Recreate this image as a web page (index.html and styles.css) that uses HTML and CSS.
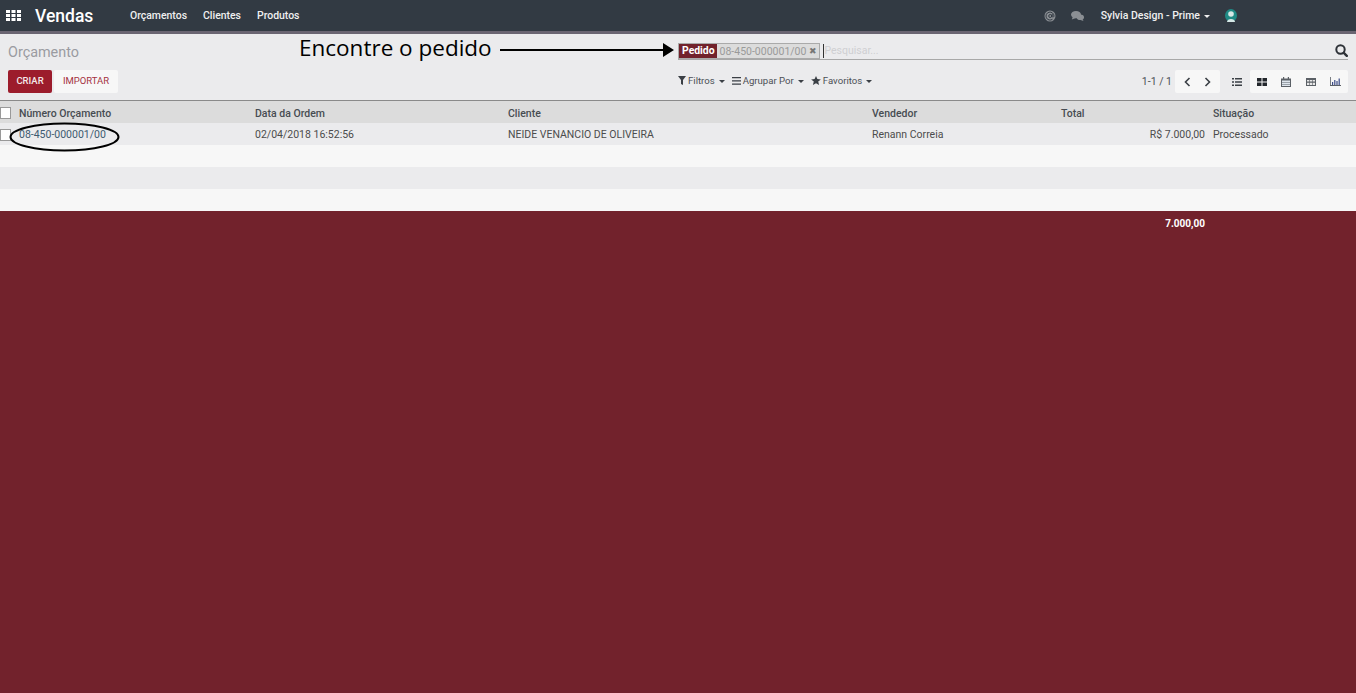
FILE: index.html
```html
<!DOCTYPE html>
<html lang="pt-BR">
<head>
<meta charset="utf-8">
<title>Vendas</title>
<link rel="stylesheet" href="styles.css">
</head>
<body>
<header class="navbar">
  <svg class="apps" width="15" height="11" viewBox="0 0 15 11"><path fill="#fff" d="M0 0h4v3H0zM5.500 0h4v3h-4zM11 0h4v3h-4zM0 4h4v3H0zM5.500 4h4v3h-4zM11 4h4v3h-4zM0 8h4v3H0zM5.500 8h4v3h-4zM11 8h4v3h-4z"/></svg>
  <span class="brand">Vendas</span>
  <nav class="menu"><a>Orçamentos</a><a>Clientes</a><a>Produtos</a></nav>
  <div class="systray">
    <svg class="tray-at" width="12" height="12" viewBox="0 0 12 12"><circle cx="6" cy="6" r="5.500" fill="#8b8f94"/><path fill="none" stroke="#323a43" stroke-width="1" d="M8.500 9.200A4 4 0 1 1 10 6c0 1.200-1.800 1.500-1.800.2V4"/><circle cx="6.200" cy="6" r="1.500" fill="none" stroke="#323a43" stroke-width="1"/></svg>
    <svg class="tray-chat" width="13" height="10" viewBox="0 0 13 10"><ellipse cx="5" cy="3.600" rx="5" ry="3.600" fill="#8b8f94"/><path fill="#8b8f94" d="M2 5.500L.8 8.500 5 7zM11.500 8l1 2-3-1z"/><ellipse cx="9.300" cy="6.300" rx="3.700" ry="2.800" fill="#8b8f94"/></svg>
    <span class="user">Sylvia Design - Prime<i class="caret"></i></span>
    <svg class="avatar" width="12" height="13" viewBox="0 0 12 13"><ellipse cx="6" cy="6.500" rx="6" ry="6.500" fill="#1f8a85"/><circle cx="6" cy="5" r="2.800" fill="#d6e8e6"/><path fill="#d6e8e6" d="M2 13c0-4 8-4 8 0z"/></svg>
  </div>
</header>

<section class="panel">
  <div class="panel-top">
    <h1 class="title">Orçamento</h1>
    <div class="search">
      <span class="facet"><b class="facet-label">Pedido</b><span class="facet-value">08-450-000001/00<i class="facet-x">✖</i></span></span>
      <span class="search-input"><span class="cursor"></span>Pesquisar...</span>
      <svg class="search-icon" width="13" height="13" viewBox="0 0 13 13"><circle cx="5.500" cy="5.500" r="4.200" fill="none" stroke="#2e3238" stroke-width="2"/><path stroke="#2e3238" stroke-width="2.400" stroke-linecap="round" d="M8.800 8.800l3 3"/></svg>
    </div>
  </div>
  <div class="panel-bottom">
    <div class="buttons"><button class="btn-primary">CRIAR</button><button class="btn-light">IMPORTAR</button></div>
    <div class="filters">
      <span class="filter"><svg width="8" height="9" viewBox="0 0 8 9"><path fill="#3a3f45" d="M0 0h8L5 4v5L3 8V4z"/></svg>Filtros<i class="caret dark"></i></span>
      <span class="filter"><svg width="9" height="8" viewBox="0 0 9 8"><path fill="#3a3f45" d="M0 0h9v1.200H0zM0 3.300h9v1.200H0zM0 6.600h9v1.200H0z"/></svg>Agrupar Por<i class="caret dark"></i></span>
      <span class="filter"><svg width="10" height="9" viewBox="0 0 10 9"><path fill="#3a3f45" d="M5 0l1.400 3.100 3.500.3-2.700 2.200.9 3.400L5 7.200 1.900 9l.9-3.400L.1 3.400l3.500-.3z"/></svg>Favoritos<i class="caret dark"></i></span>
    </div>
    <div class="right-tools">
      <span class="pager-text">1-1 / 1</span>
      <div class="pager-box">
        <svg width="7" height="10" viewBox="0 0 7 10"><path fill="none" stroke="#3a3f45" stroke-width="1.600" d="M5.500 1L1.500 5l4 4"/></svg>
        <svg width="7" height="10" viewBox="0 0 7 10"><path fill="none" stroke="#3a3f45" stroke-width="1.600" d="M1.500 1l4 4-4 4"/></svg>
      </div>
      <svg class="view-list" width="10" height="8" viewBox="0 0 10 8"><path fill="#3a3f45" d="M0 0h2v1.500H0zM3 0h7v1.500H3zM0 3.200h2v1.500H0zM3 3.200h7v1.500H3zM0 6.400h2v1.500H0zM3 6.400h7v1.500H3z"/></svg>
      <div class="view-box">
        <svg width="10" height="8" viewBox="0 0 10 8"><path fill="#23272c" d="M0 0h4.500v3.500H0zM5.500 0H10v3.500H5.500zM0 4.500h4.500V8H0zM5.500 4.500H10V8H5.500z"/></svg>
        <svg width="10" height="10" viewBox="0 0 10 10"><path fill="#5b6066" d="M0 1.500h10V10H0z"/><path fill="#dfe6ee" d="M1 3.500h8V9H1z"/><path fill="#5b6066" d="M2 0h1.200v2.500H2zM6.800 0H8v2.500H6.800zM1 5h8v.6H1zM1 7h8v.6H1z"/></svg>
        <svg width="10" height="8" viewBox="0 0 10 8"><path fill="#5b6066" d="M0 0h10v8H0z"/><path fill="#e8e8e8" d="M1 2h2.300v1.500H1zM3.900 2h2.300v1.500H3.900zM6.800 2H9v1.500H6.800zM1 4.700h2.300v2.300H1zM3.900 4.700h2.300v2.300H3.900zM6.800 4.700H9v2.300H6.800z"/></svg>
        <svg width="11" height="9" viewBox="0 0 11 9"><path fill="#5b6066" d="M0 0h.8v8H11v1H0z"/><path fill="#3b4a86" d="M2 5h1.200v3H2zM4.200 3h1.200v5H4.200zM6.400 4h1.200v4H6.400zM8.600 1.500h1.200V8H8.600z"/></svg>
      </div>
    </div>
  </div>
</section>

<table class="list">
  <colgroup><col class="c-main"><col class="c-date"><col class="c-client"><col class="c-seller"><col class="c-total"><col></colgroup>
  <thead>
    <tr><th class="first"><span class="check"></span>Número Orçamento</th><th>Data da Ordem</th><th>Cliente</th><th>Vendedor</th><th>Total</th><th>Situação</th></tr>
  </thead>
  <tbody>
    <tr><td class="first ref"><span class="check"></span>08-450-000001/00</td><td>02/04/2018 16:52:56</td><td>NEIDE VENANCIO DE OLIVEIRA</td><td>Renann Correia</td><td class="num">R$ 7.000,00</td><td>Processado</td></tr>
    <tr><td colspan="6"></td></tr>
    <tr><td colspan="6"></td></tr>
    <tr><td colspan="6"></td></tr>
  </tbody>
  <tfoot>
    <tr><td colspan="4"></td><td class="num">7.000,00</td><td></td></tr>
  </tfoot>
</table>

<div class="callout">Encontre o pedido</div>
<svg class="arrow" width="175" height="16" viewBox="0 0 175 16"><path fill="#000" d="M0 7h163V1l11 7-11 7V9H0z"/></svg>
<svg class="ellipse" width="111" height="30" viewBox="0 0 111 30"><ellipse cx="55.500" cy="15" rx="54" ry="13.500" fill="none" stroke="#000" stroke-width="2"/></svg>
</body>
</html>
```
FILE: styles.css
```css
* { box-sizing: border-box; }
html, body { margin: 0; height: 100%; }
body {
  background: #72222c;
  font-family: Roboto, "Liberation Sans", sans-serif;
  font-size: 10.5px;
  color: #4c4c4c;
  overflow: hidden;
  position: relative;
}
.navbar {
  height: 34px;
  background: #323a43;
  border-bottom: 3px solid #6a6572;
  display: flex;
  align-items: center;
  color: #fff;
  padding-left: 6px;
}
.apps { flex: none; }
.brand { font-size: 17.5px; font-weight: 500; margin-left: 14px; width: 95px; }
.menu { display: flex; gap: 16px; font-weight: 500; font-size: 10.45px; color: #f0f0f0; }
.systray { margin-left: auto; display: flex; align-items: center; padding-right: 119px; }
.tray-chat { margin-left: 15px; }
.user { margin-left: 17px; font-weight: 500; font-size: 10.5px; color: #f0f0f0; }
.avatar { margin-left: 15px; }
.caret {
  display: inline-block;
  width: 0; height: 0;
  margin-left: 4px;
  vertical-align: middle;
  border-top: 3px solid #f0f0f0;
  border-left: 3px solid transparent;
  border-right: 3px solid transparent;
}
.caret.dark { border-top-color: #3a3f45; }

.panel {
  height: 67px;
  background: #ebebed;
  border-bottom: 1px solid #8a8a8a;
}
.panel-top { height: 36px; display: flex; align-items: flex-start; }
.title { margin: 11px 0 0 8px; width: 670px; font-size: 14.4px; font-weight: 400; color: #9a9ba1; line-height: 16px; }
.search {
  margin-top: 8px;
  width: 670px;
  height: 18px;
  display: flex;
  align-items: center;
  border-bottom: 1px solid #a8a8a8;
}
.facet { display: flex; height: 16px; border: 1px solid #aaa; line-height: 14px; background: #dcdcdc; }
.facet-label { background: #72222c; color: #fff; font-weight: 700; font-size: 10.4px; padding: 0 2px 0 3px; }
.facet-value { color: #9a9a9a; padding: 0 2px 0 3px; font-size: 10.5px; }
.facet-x { font-style: normal; font-size: 9px; margin-left: 3px; color: #777; vertical-align: 1px; }
.search-input { color: #cfcfd2; margin-left: 3px; display: flex; align-items: center; font-size: 10.5px; }
.cursor { width: 1px; height: 14px; background: #333; }
.search-icon { margin-left: auto; }

.panel-bottom { height: 30px; display: flex; align-items: flex-start; padding-right: 8px; }
.buttons { display: flex; margin-left: 8px; width: 670px; }
.btn-primary, .btn-light {
  height: 23px;
  border: 0;
  border-radius: 2px;
  font: 500 9.5px Roboto, "Liberation Sans", sans-serif;
  padding: 0 0 2px;
}
.btn-primary { width: 44px; background: #9c1c2c; color: #f3e8e9; }
.btn-light { width: 64px; margin-left: 2px; background: #f7f7f7; color: #a5323f; font-weight: 400; }
.filters { display: flex; gap: 7px; line-height: 21px; color: #4c5056; font-size: 9.6px; }
.filter svg { margin-right: 2px; vertical-align: -1px; }
.right-tools { margin-left: auto; display: flex; align-items: center; height: 23px; color: #4c5056; }
.pager-text { margin-right: 3px; }
.pager-box {
  width: 45px; height: 23px; background: #f7f7f7; border-radius: 2px;
  display: flex; align-items: center; justify-content: space-around; padding: 0 3px;
}
.view-list { margin: 0 8px 0 12px; }
.view-box {
  width: 98px; height: 23px; background: #f7f7f7; border-radius: 2px;
  display: flex; align-items: center; justify-content: space-between; padding: 0 7px;
}

.list { width: 100%; border-collapse: collapse; table-layout: fixed; }
.c-main { width: 251px; }
.c-date { width: 253px; }
.c-client { width: 364px; }
.c-seller { width: 189px; }
.c-total { width: 152px; }
.list th, .list td { height: 22px; padding: 1px 4px 0; line-height: 14px; white-space: nowrap; text-align: left; }
.list th { background: #dcdcdc; font-weight: 500; color: #474c52; padding-top: 3px; }
.list td.first, .list th.first { padding-left: 19px; position: relative; }
.list td.ref { color: #3d5a70; }
.list tbody tr:nth-child(odd) td { background: #ebebed; }
.list tbody tr:nth-child(even) td { background: #f7f7f7; }
.list td.num { text-align: right; }
.list tfoot td { color: #fff; font-weight: 700; font-size: 10px; background: #72222c; padding-top: 3px; }
.check {
  position: absolute; left: 0; top: 6px;
  width: 11px; height: 12px;
  background: #fff; border: 1px solid #999;
}

.callout {
  position: absolute; left: 299px; top: 33px;
  font-family: "Open Sans", sans-serif;
  font-size: 22.5px; line-height: 30px; color: #000;
}
.arrow { position: absolute; left: 500px; top: 42px; }
.ellipse { position: absolute; left: 9px; top: 122px; }
```
